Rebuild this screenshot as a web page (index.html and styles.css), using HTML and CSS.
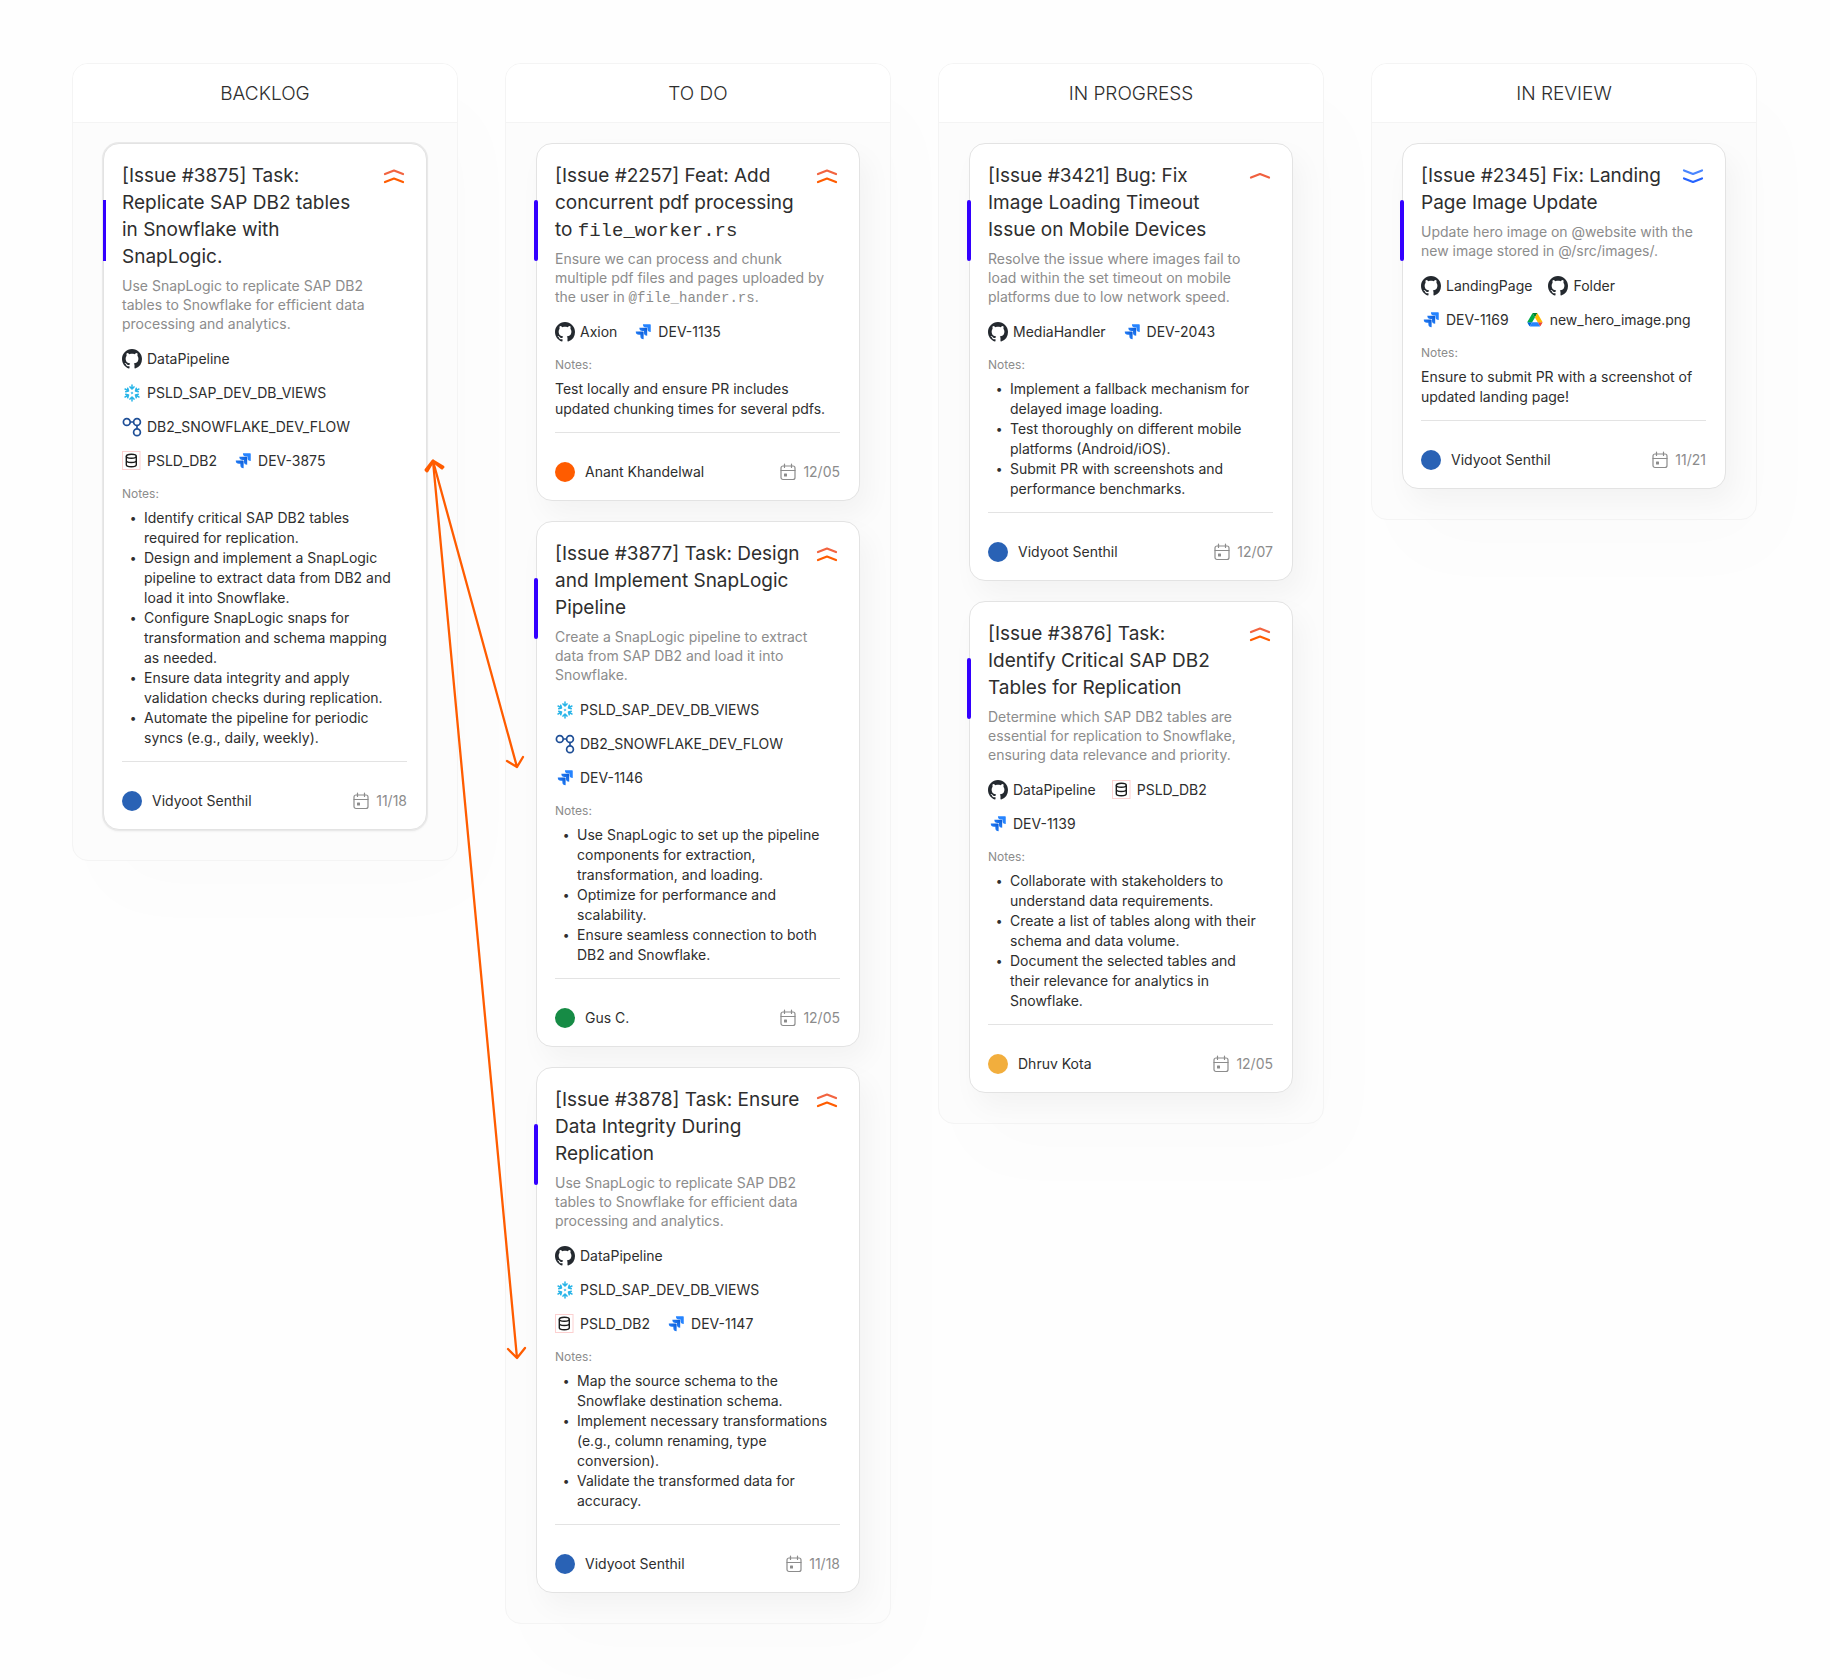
FILE: index.html
```html
<!DOCTYPE html>
<html lang="en">
<head>
<meta charset="utf-8">
<meta name="viewport" content="width=device-width, initial-scale=1">
<title>Sprint board</title>
<link rel="stylesheet" href="styles.css">
</head>
<body>
<svg class="sprite" aria-hidden="true">
  <defs>
    <linearGradient id="jira-fade" x1="1" y1="0" x2="0.3" y2="0.7">
      <stop offset="0.2" stop-color="#0f5fd8"/>
      <stop offset="1" stop-color="#2684ff"/>
    </linearGradient>
  </defs>
  <symbol id="github" viewBox="0 0 16 16">
    <path fill="#24292f" d="M8 0C3.58 0 0 3.58 0 8c0 3.54 2.29 6.53 5.47 7.59.4.07.55-.17.55-.38 0-.19-.01-.82-.01-1.49-2.01.37-2.53-.49-2.69-.94-.09-.23-.48-.94-.82-1.13-.28-.15-.68-.52-.01-.53.63-.01 1.08.58 1.23.82.72 1.21 1.87.87 2.33.66.07-.52.28-.87.51-1.07-1.78-.2-3.64-.89-3.64-3.95 0-.87.31-1.59.82-2.15-.08-.2-.36-1.02.08-2.12 0 0 .67-.21 2.2.82.64-.18 1.32-.27 2-.27s1.36.09 2 .27c1.53-1.04 2.2-.82 2.2-.82.44 1.1.16 1.92.08 2.12.51.56.82 1.27.82 2.15 0 3.07-1.87 3.75-3.65 3.95.29.25.54.73.54 1.48 0 1.07-.01 1.93-.01 2.2 0 .21.15.46.55.38A8.01 8.01 0 0 0 16 8c0-4.42-3.58-8-8-8z"/>
  </symbol>
  <symbol id="snowflake" viewBox="0 0 20 20">
    <g fill="none" stroke="#29b5e8" stroke-width="1.5" stroke-linecap="round" stroke-linejoin="round">
      <path id="flake-arm" d="M10 2v3.500M8 3.900 10 6 12 3.900"/>
      <use href="#flake-arm" transform="rotate(60 10 10)"/>
      <use href="#flake-arm" transform="rotate(120 10 10)"/>
      <use href="#flake-arm" transform="rotate(180 10 10)"/>
      <use href="#flake-arm" transform="rotate(240 10 10)"/>
      <use href="#flake-arm" transform="rotate(300 10 10)"/>
    </g>
    <path fill="none" stroke="#29b5e8" stroke-width="0.8" d="M10 8.900 11.100 10 10 11.100 8.900 10z"/>
  </symbol>
  <symbol id="flow" viewBox="0 0 20 20">
    <g fill="none" stroke="#1f4f97" stroke-width="1.7">
      <circle cx="4.8" cy="5" r="3.4"/><circle cx="15" cy="5" r="3.4"/><circle cx="15" cy="15.2" r="3.4"/>
      <path d="M8.2 5h3.4M15 8.4v3.4"/>
    </g>
  </symbol>
  <symbol id="database" viewBox="0 0 20 20">
    <rect x="0.5" y="0.5" width="17.5" height="18" fill="#fff" stroke="#fcd0d0"/>
    <g fill="none" stroke="#1c1c1c" stroke-width="1.4">
      <ellipse cx="9.3" cy="5.2" rx="5" ry="2"/>
      <path d="M4.3 5.2v8.6c0 1.2 2.2 2 5 2s5-.8 5-2V5.2M4.3 9.5c0 1.200 2.200 2 5 2s5-.8 5-2"/>
    </g>
  </symbol>
  <symbol id="jira" viewBox="0 0 32 32">
    <g transform="translate(4.400 3.600)">
      <path fill="#2684ff" d="M23.013 0H11.455a5.215 5.215 0 0 0 5.215 5.215h2.129v2.057A5.215 5.215 0 0 0 24 12.483V1.005A1.001 1.001 0 0 0 23.013 0Z"/>
      <path fill="url(#jira-fade)" d="M17.294 5.757H5.736a5.215 5.215 0 0 0 5.215 5.214h2.129v2.058a5.218 5.218 0 0 0 5.215 5.214V6.758a1.001 1.001 0 0 0-1.001-1.001z"/>
      <path fill="url(#jira-fade)" d="M11.571 11.513H0a5.218 5.218 0 0 0 5.232 5.215h2.13v2.057A5.215 5.215 0 0 0 12.575 24V12.518a1.005 1.005 0 0 0-1.005-1.005z"/>
    </g>
  </symbol>
  <symbol id="drive" viewBox="-14 -18 116 116">
    <path fill="#0066da" d="m6.600 66.850 3.850 6.650c.8 1.400 1.950 2.500 3.300 3.300l13.750-23.800h-27.500c0 1.550.4 3.100 1.200 4.500z"/>
    <path fill="#00ac47" d="m43.650 25-13.750-23.800c-1.350.8-2.500 1.900-3.300 3.300l-25.400 44a9.060 9.060 0 0 0-1.200 4.500h27.500z"/>
    <path fill="#ea4335" d="m73.550 76.800c1.350-.8 2.500-1.900 3.300-3.300l1.600-2.750 7.650-13.250c.8-1.400 1.200-2.950 1.200-4.500h-27.502l5.852 11.500z"/>
    <path fill="#00832d" d="m43.650 25 13.750-23.800c-1.350-.8-2.900-1.200-4.500-1.200h-18.500c-1.600 0-3.150.45-4.500 1.200z"/>
    <path fill="#2684fc" d="m59.800 53h-32.300l-13.750 23.800c1.350.8 2.900 1.200 4.500 1.200h50.800c1.600 0 3.150-.45 4.500-1.200z"/>
    <path fill="#ffba00" d="m73.400 26.500-12.700-22c-.8-1.400-1.950-2.500-3.300-3.300l-13.750 23.800 16.150 28h27.450c0-1.550-.4-3.100-1.200-4.500z"/>
  </symbol>
  <symbol id="calendar" viewBox="0 0 16 18">
    <g fill="none" stroke="#8c8c8c" stroke-width="1.200" stroke-linecap="round">
      <rect x="1" y="3" width="14" height="13.500" rx="2"/>
      <path d="M1 7.500h14M4.500 1v3.500M11.500 1v3.500"/>
    </g>
    <rect x="4" y="10.500" width="3" height="3" rx="0.500" fill="#8c8c8c"/>
  </symbol>
  <symbol id="highest" viewBox="0 0 22 16">
    <g fill="none" stroke-width="2.200" stroke-linecap="round" stroke-linejoin="round">
      <path stroke="#f26440" d="M2 6 11 2.500 20 6"/>
      <path stroke="#ff5c00" d="M2 14 11 10.500 20 14"/>
    </g>
  </symbol>
  <symbol id="high" viewBox="0 0 22 16">
    <path fill="none" stroke="#f0603f" stroke-width="2.200" stroke-linecap="round" stroke-linejoin="round" d="M2 9.500 11 6 20 9.500"/>
  </symbol>
  <symbol id="lowest" viewBox="0 0 22 16">
    <g fill="none" stroke-width="2.200" stroke-linecap="round" stroke-linejoin="round">
      <path stroke="#4a86ff" d="M2 2.500 11 6 20 2.500"/>
      <path stroke="#2563ff" d="M2 10.500 11 14 20 10.500"/>
    </g>
  </symbol>
</svg>

<main class="board">
  <section class="column column-linked">
    <h2 class="column-title">BACKLOG</h2>
    <div class="column-body">
      <article class="card card-selected">
        <header class="card-head">
          <h3 class="card-title">[Issue #3875] Task: Replicate SAP DB2 tables in Snowflake with SnapLogic.</h3>
          <svg class="priority" role="img" aria-label="Highest priority"><use href="#highest"/></svg>
        </header>
        <p class="summary">Use SnapLogic to replicate SAP DB2 tables to Snowflake for efficient data processing and analytics.</p>
        <div class="links">
          <a class="link" href="#"><svg class="icon"><use href="#github"/></svg>DataPipeline</a>
          <a class="link" href="#"><svg class="icon"><use href="#snowflake"/></svg>PSLD_SAP_DEV_DB_VIEWS</a>
          <a class="link" href="#"><svg class="icon"><use href="#flow"/></svg>DB2_SNOWFLAKE_DEV_FLOW</a>
          <a class="link" href="#"><svg class="icon"><use href="#database"/></svg>PSLD_DB2</a>
          <a class="link" href="#"><svg class="icon"><use href="#jira"/></svg>DEV-3875</a>
        </div>
        <h4 class="notes-label">Notes:</h4>
        <ul class="notes">
          <li>Identify critical SAP DB2 tables required for replication.</li>
          <li>Design and implement a SnapLogic pipeline to extract data from DB2 and load it into Snowflake.</li>
          <li>Configure SnapLogic snaps for transformation and schema mapping as needed.</li>
          <li>Ensure data integrity and apply validation checks during replication.</li>
          <li>Automate the pipeline for periodic syncs (e.g., daily, weekly).</li>
        </ul>
        <footer class="card-foot">
          <span class="avatar avatar-blue"></span>
          <span class="assignee">Vidyoot Senthil</span>
          <svg class="calendar"><use href="#calendar"/></svg>
          <time class="due">11/18</time>
        </footer>
      </article>
    </div>
    <svg class="connectors" viewBox="0 0 110 910" aria-hidden="true">
      <g fill="none" stroke="#ff5c00" stroke-width="2.300" stroke-linecap="round" stroke-linejoin="round">
        <path d="M13 6 97 312M87 306l10 6 6-10"/>
        <path d="M13 6 97 903M88 894l9 9 8-10"/>
        <path stroke-width="3" d="M6 15 13 6l9 7M7 16l6-10 10 6"/>
      </g>
    </svg>
  </section>

  <section class="column">
    <h2 class="column-title">TO DO</h2>
    <div class="column-body">
      <article class="card">
        <header class="card-head">
          <h3 class="card-title">[Issue #2257] Feat: Add concurrent pdf processing to <code>file_worker.rs</code></h3>
          <svg class="priority" role="img" aria-label="Highest priority"><use href="#highest"/></svg>
        </header>
        <p class="summary">Ensure we can process and chunk multiple pdf files and pages uploaded by the user in <code>@file_hander.rs</code>.</p>
        <div class="links">
          <a class="link" href="#"><svg class="icon"><use href="#github"/></svg>Axion</a>
          <a class="link" href="#"><svg class="icon"><use href="#jira"/></svg>DEV-1135</a>
        </div>
        <h4 class="notes-label">Notes:</h4>
        <p class="notes">Test locally and ensure PR includes updated chunking times for several pdfs.</p>
        <footer class="card-foot">
          <span class="avatar avatar-orange"></span>
          <span class="assignee">Anant Khandelwal</span>
          <svg class="calendar"><use href="#calendar"/></svg>
          <time class="due">12/05</time>
        </footer>
      </article>
      <article class="card">
        <header class="card-head">
          <h3 class="card-title">[Issue #3877] Task: Design and Implement SnapLogic Pipeline</h3>
          <svg class="priority" role="img" aria-label="Highest priority"><use href="#highest"/></svg>
        </header>
        <p class="summary">Create a SnapLogic pipeline to extract data from SAP DB2 and load it into Snowflake.</p>
        <div class="links">
          <a class="link" href="#"><svg class="icon"><use href="#snowflake"/></svg>PSLD_SAP_DEV_DB_VIEWS</a>
          <a class="link" href="#"><svg class="icon"><use href="#flow"/></svg>DB2_SNOWFLAKE_DEV_FLOW</a>
          <a class="link" href="#"><svg class="icon"><use href="#jira"/></svg>DEV-1146</a>
        </div>
        <h4 class="notes-label">Notes:</h4>
        <ul class="notes">
          <li>Use SnapLogic to set up the pipeline components for extraction, transformation, and loading.</li>
          <li>Optimize for performance and scalability.</li>
          <li>Ensure seamless connection to both DB2 and Snowflake.</li>
        </ul>
        <footer class="card-foot">
          <span class="avatar avatar-green"></span>
          <span class="assignee">Gus C.</span>
          <svg class="calendar"><use href="#calendar"/></svg>
          <time class="due">12/05</time>
        </footer>
      </article>
      <article class="card">
        <header class="card-head">
          <h3 class="card-title">[Issue #3878] Task: Ensure Data Integrity During Replication</h3>
          <svg class="priority" role="img" aria-label="Highest priority"><use href="#highest"/></svg>
        </header>
        <p class="summary">Use SnapLogic to replicate SAP DB2 tables to Snowflake for efficient data processing and analytics.</p>
        <div class="links">
          <a class="link" href="#"><svg class="icon"><use href="#github"/></svg>DataPipeline</a>
          <a class="link" href="#"><svg class="icon"><use href="#snowflake"/></svg>PSLD_SAP_DEV_DB_VIEWS</a>
          <a class="link" href="#"><svg class="icon"><use href="#database"/></svg>PSLD_DB2</a>
          <a class="link" href="#"><svg class="icon"><use href="#jira"/></svg>DEV-1147</a>
        </div>
        <h4 class="notes-label">Notes:</h4>
        <ul class="notes">
          <li>Map the source schema to the Snowflake destination schema.</li>
          <li>Implement necessary transformations (e.g., column renaming, type conversion).</li>
          <li>Validate the transformed data for accuracy.</li>
        </ul>
        <footer class="card-foot">
          <span class="avatar avatar-blue"></span>
          <span class="assignee">Vidyoot Senthil</span>
          <svg class="calendar"><use href="#calendar"/></svg>
          <time class="due">11/18</time>
        </footer>
      </article>
    </div>
  </section>

  <section class="column">
    <h2 class="column-title">IN PROGRESS</h2>
    <div class="column-body">
      <article class="card">
        <header class="card-head">
          <h3 class="card-title">[Issue #3421] Bug: Fix Image Loading Timeout Issue on Mobile Devices</h3>
          <svg class="priority" role="img" aria-label="High priority"><use href="#high"/></svg>
        </header>
        <p class="summary">Resolve the issue where images fail to load within the set timeout on mobile platforms due to low network speed.</p>
        <div class="links">
          <a class="link" href="#"><svg class="icon"><use href="#github"/></svg>MediaHandler</a>
          <a class="link" href="#"><svg class="icon"><use href="#jira"/></svg>DEV-2043</a>
        </div>
        <h4 class="notes-label">Notes:</h4>
        <ul class="notes">
          <li>Implement a fallback mechanism for delayed image loading.</li>
          <li>Test thoroughly on different mobile platforms (Android/iOS).</li>
          <li>Submit PR with screenshots and performance benchmarks.</li>
        </ul>
        <footer class="card-foot">
          <span class="avatar avatar-blue"></span>
          <span class="assignee">Vidyoot Senthil</span>
          <svg class="calendar"><use href="#calendar"/></svg>
          <time class="due">12/07</time>
        </footer>
      </article>
      <article class="card">
        <header class="card-head">
          <h3 class="card-title">[Issue #3876] Task: Identify Critical SAP DB2 Tables for Replication</h3>
          <svg class="priority" role="img" aria-label="Highest priority"><use href="#highest"/></svg>
        </header>
        <p class="summary">Determine which SAP DB2 tables are essential for replication to Snowflake, ensuring data relevance and priority.</p>
        <div class="links">
          <a class="link" href="#"><svg class="icon"><use href="#github"/></svg>DataPipeline</a>
          <a class="link" href="#"><svg class="icon"><use href="#database"/></svg>PSLD_DB2</a>
          <a class="link" href="#"><svg class="icon"><use href="#jira"/></svg>DEV-1139</a>
        </div>
        <h4 class="notes-label">Notes:</h4>
        <ul class="notes">
          <li>Collaborate with stakeholders to understand data requirements.</li>
          <li>Create a list of tables along with their schema and data volume.</li>
          <li>Document the selected tables and their relevance for analytics in Snowflake.</li>
        </ul>
        <footer class="card-foot">
          <span class="avatar avatar-amber"></span>
          <span class="assignee">Dhruv Kota</span>
          <svg class="calendar"><use href="#calendar"/></svg>
          <time class="due">12/05</time>
        </footer>
      </article>
    </div>
  </section>

  <section class="column">
    <h2 class="column-title">IN REVIEW</h2>
    <div class="column-body">
      <article class="card">
        <header class="card-head">
          <h3 class="card-title">[Issue #2345] Fix: Landing Page Image Update</h3>
          <svg class="priority" role="img" aria-label="Lowest priority"><use href="#lowest"/></svg>
        </header>
        <p class="summary">Update hero image on @website with the new image stored in @/src/images/.</p>
        <div class="links">
          <a class="link" href="#"><svg class="icon"><use href="#github"/></svg>LandingPage</a>
          <a class="link" href="#"><svg class="icon"><use href="#github"/></svg>Folder</a>
          <a class="link" href="#"><svg class="icon"><use href="#jira"/></svg>DEV-1169</a>
          <a class="link" href="#"><svg class="icon"><use href="#drive"/></svg>new_hero_image.png</a>
        </div>
        <h4 class="notes-label">Notes:</h4>
        <p class="notes">Ensure to submit PR with a screenshot of updated landing page!</p>
        <footer class="card-foot">
          <span class="avatar avatar-blue"></span>
          <span class="assignee">Vidyoot Senthil</span>
          <svg class="calendar"><use href="#calendar"/></svg>
          <time class="due">11/21</time>
        </footer>
      </article>
    </div>
  </section>
</main>
</body>
</html>
```
FILE: styles.css
```css
* {
  box-sizing: border-box;
  margin: 0;
  padding: 0;
}

body {
  background: #fefefe;
  color: #2e2e2e;
  font: 14px/20px Inter, sans-serif;
}

.sprite {
  position: absolute;
  width: 0;
  height: 0;
}

.board {
  display: grid;
  grid-template-columns: repeat(4, minmax(0, 1fr));
  align-items: start;
  gap: 47px;
  padding: 63px 73px 56px 72px;
}

.column {
  border: 1px solid #f4f4f4;
  border-radius: 16px;
  background: #fcfcfc;
  box-shadow: 24px 40px 80px rgba(0, 0, 0, 0.01);
}

.column-linked {
  position: relative;
  z-index: 1;
}

.column-title {
  padding: 18px 16px 16px;
  border-bottom: 1px solid #f4f4f4;
  border-radius: 15px 15px 0 0;
  background: #fff;
  font-size: 19px;
  font-weight: 300;
  line-height: 24px;
  text-align: center;
}

.column-body {
  display: flex;
  flex-direction: column;
  gap: 20px;
  padding: 20px 30px 30px;
}

.card {
  position: relative;
  padding: 18px 19px 18px 18px;
  border: 1px solid #e3e3e3;
  border-radius: 16px;
  background: #fff;
  box-shadow: 8px 14px 28px rgba(0, 0, 0, 0.04);
}

.card::before {
  content: "";
  position: absolute;
  top: 56px;
  left: -3px;
  width: 4px;
  height: 61px;
  border-radius: 2px;
  background: #3300ff;
}

.card-selected {
  box-shadow: 0 0 0 1px #e9e9e9, 0 1px 3px rgba(0, 0, 0, 0.08);
}

.card-selected::before {
  left: -1px;
  width: 3px;
  border-radius: 0;
}

.card-head {
  display: flex;
  justify-content: space-between;
  align-items: flex-start;
  padding-right: 2px;
}

.card-title {
  flex: 0 1 248px;
  font-size: 19px;
  font-weight: 400;
  line-height: 27px;
}

.card-title code {
  font: 19px/20px "Liberation Mono", monospace;
}

.priority {
  flex: none;
  width: 22px;
  height: 16px;
  margin-top: 6px;
}

.summary {
  margin: 6px 0 16px;
  padding-right: 5px;
  color: #8c8c8c;
  line-height: 19px;
}

.summary code {
  font: 14px/16px "Liberation Mono", monospace;
}

.links {
  display: flex;
  flex-wrap: wrap;
  gap: 14px 16px;
}

.link {
  display: flex;
  align-items: center;
  gap: 5px;
  color: inherit;
  text-decoration: none;
}

.icon {
  flex: none;
  width: 20px;
  height: 20px;
}

.notes-label {
  margin: 15px 0 6px;
  color: #8c8c8c;
  font-size: 12px;
  font-weight: 400;
  line-height: 16px;
}

.notes {
  padding-right: 5px;
  list-style: none;
}

.notes li {
  display: grid;
  grid-template-columns: 22px 1fr;
}

.notes li::before {
  content: "•";
  font-size: 12px;
  text-align: center;
}

.card-foot {
  display: flex;
  align-items: center;
  margin-top: 13px;
  padding-top: 29px;
  border-top: 1px solid #e3e3e3;
}

.avatar {
  width: 20px;
  height: 20px;
  margin-right: 10px;
  border-radius: 50%;
}

.avatar-blue { background: #2962b5; }
.avatar-orange { background: #ff5c00; }
.avatar-green { background: #168b45; }
.avatar-amber { background: #f2ae3d; }

.calendar {
  width: 16px;
  height: 18px;
  margin: 0 7px 0 auto;
}

.due {
  color: #8c8c8c;
}

.connectors {
  position: absolute;
  top: 391px;
  left: calc(100% - 37px);
  width: 110px;
  height: 910px;
  pointer-events: none;
}
```
